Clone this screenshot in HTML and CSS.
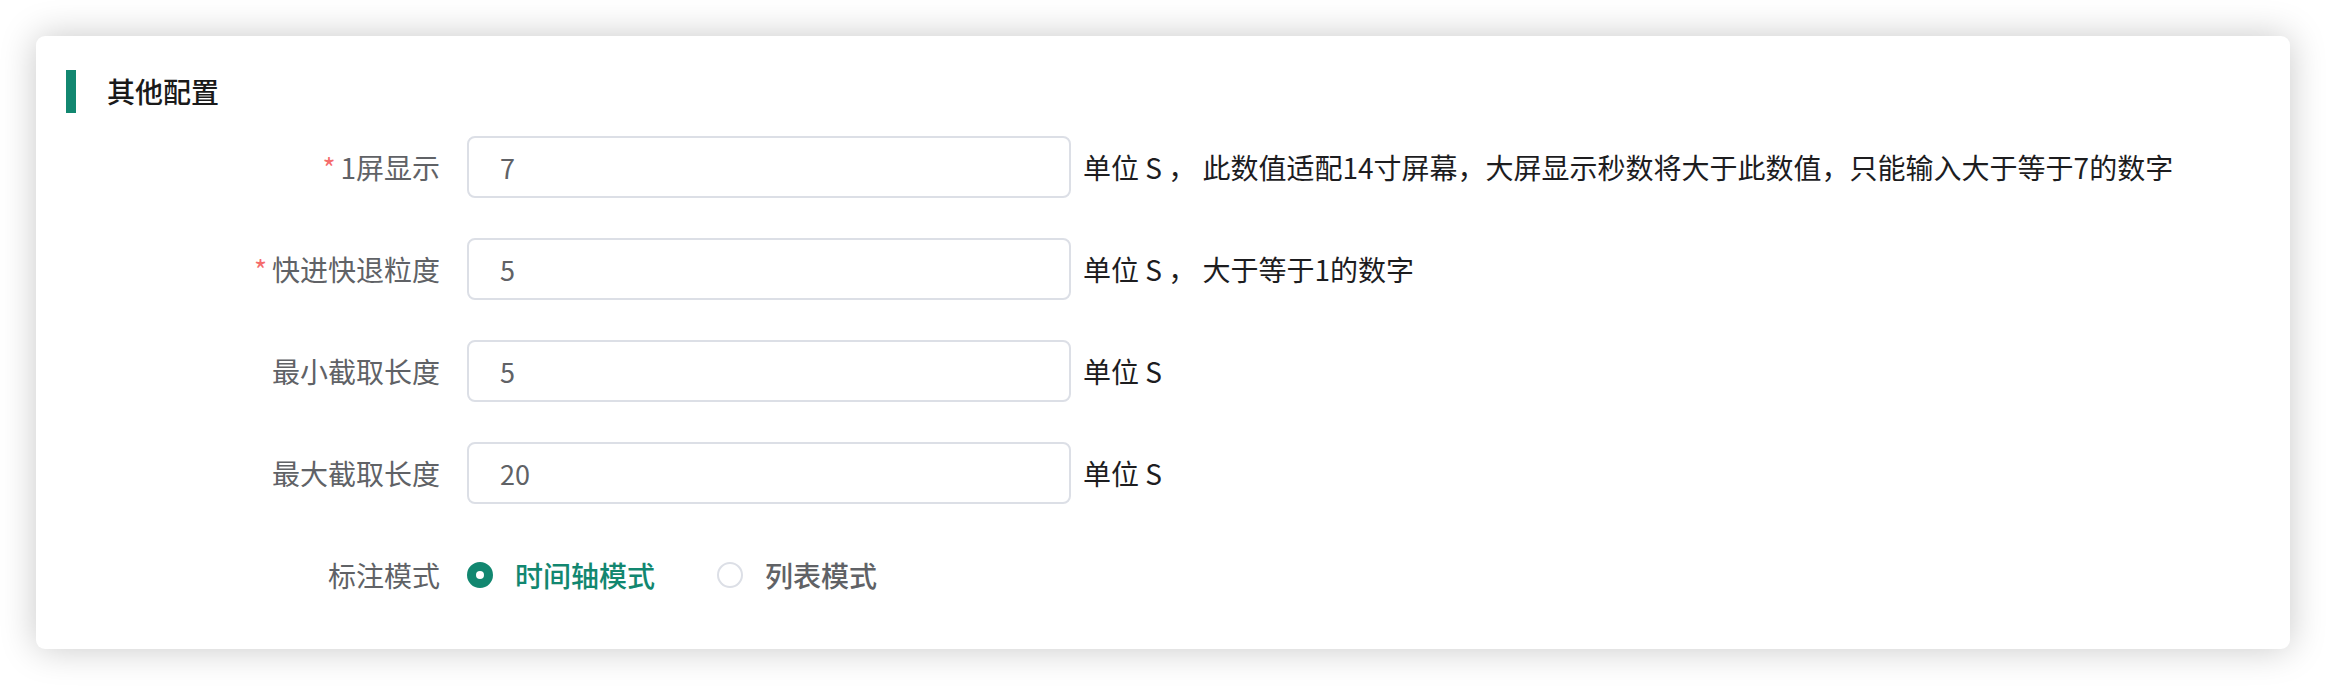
FILE: index.html
```html
<!DOCTYPE html>
<html lang="zh-CN">
<head>
<meta charset="utf-8">
<title>其他配置</title>
<link rel="stylesheet" href="styles.css">
</head>
<body>
<div class="card">
  <div class="section-title">
    <span class="bar"></span>
    <span class="title-text">其他配置</span>
  </div>
  <div class="form">
    <div class="row">
      <label class="label"><span class="req">*</span>1屏显示</label>
      <div class="input">7</div>
      <span class="hint">单位 S ， 此数值适配14寸屏幕，大屏显示秒数将大于此数值，只能输入大于等于7的数字</span>
    </div>
    <div class="row">
      <label class="label"><span class="req">*</span>快进快退粒度</label>
      <div class="input">5</div>
      <span class="hint">单位 S ， 大于等于1的数字</span>
    </div>
    <div class="row">
      <label class="label">最小截取长度</label>
      <div class="input">5</div>
      <span class="hint">单位 S</span>
    </div>
    <div class="row">
      <label class="label">最大截取长度</label>
      <div class="input">20</div>
      <span class="hint">单位 S</span>
    </div>
    <div class="row">
      <label class="label">标注模式</label>
      <div class="radio-group">
        <span class="radio checked"><span class="dot"></span><span class="radio-text">时间轴模式</span></span>
        <span class="radio"><span class="dot"></span><span class="radio-text">列表模式</span></span>
      </div>
    </div>
  </div>
</div>
</body>
</html>
```
FILE: styles.css
```css
html, body {
  margin: 0;
  padding: 0;
  background: #ffffff;
}
body {
  font-family: "Noto Sans CJK SC", "Noto Sans", "Liberation Sans", sans-serif;
  padding: 36px;
  box-sizing: border-box;
  width: 2326px;
  height: 686px;
}
.card {
  width: 2254px;
  height: 613px;
  box-sizing: border-box;
  background: #ffffff;
  border-radius: 9px;
  box-shadow: 0 0 36px rgba(0, 0, 0, 0.22);
  padding: 34px 30px 43px 30px;
}
.section-title {
  display: flex;
  align-items: center;
  height: 43px;
}
.bar {
  width: 10px;
  height: 43px;
  background: #128770;
}
.title-text {
  margin-left: 31px;
  font-size: 28px;
  font-weight: 500;
  color: #1a1a1a;
  line-height: 43px;
}
.form {
  margin-top: 23px;
  display: flex;
  flex-direction: column;
  gap: 40px;
}
.row {
  display: flex;
  align-items: center;
  height: 62px;
}
.label {
  width: 374px;
  flex: none;
  text-align: right;
  font-size: 28px;
  color: #606266;
  margin-right: 27px;
}
.req {
  color: #f56c6c;
  margin-right: 5px;
}
.input {
  width: 604px;
  height: 62px;
  box-sizing: border-box;
  border: 2px solid #dcdfe6;
  border-radius: 8px;
  padding-left: 31px;
  display: flex;
  align-items: center;
  font-size: 27px;
  color: #606266;
  flex: none;
}
.hint {
  margin-left: 12px;
  font-size: 28px;
  color: #1d1d1f;
  white-space: nowrap;
}
.radio-group {
  display: flex;
  align-items: center;
}
.radio {
  display: flex;
  align-items: center;
  margin-right: 62px;
}
.dot {
  width: 26px;
  height: 26px;
  box-sizing: border-box;
  border-radius: 50%;
  border: 2px solid #dcdfe6;
  background: #fff;
  margin-right: 22px;
  flex: none;
  position: relative;
}
.radio.checked .dot {
  border-color: #128770;
  background: #128770;
}
.radio.checked .dot::after {
  content: "";
  position: absolute;
  left: 50%;
  top: 50%;
  width: 8px;
  height: 8px;
  margin: -4px 0 0 -4px;
  border-radius: 50%;
  background: #fff;
}
.radio-text {
  font-size: 28px;
  font-weight: 500;
  color: #606266;
}
.radio.checked .radio-text {
  color: #128770;
}
```
